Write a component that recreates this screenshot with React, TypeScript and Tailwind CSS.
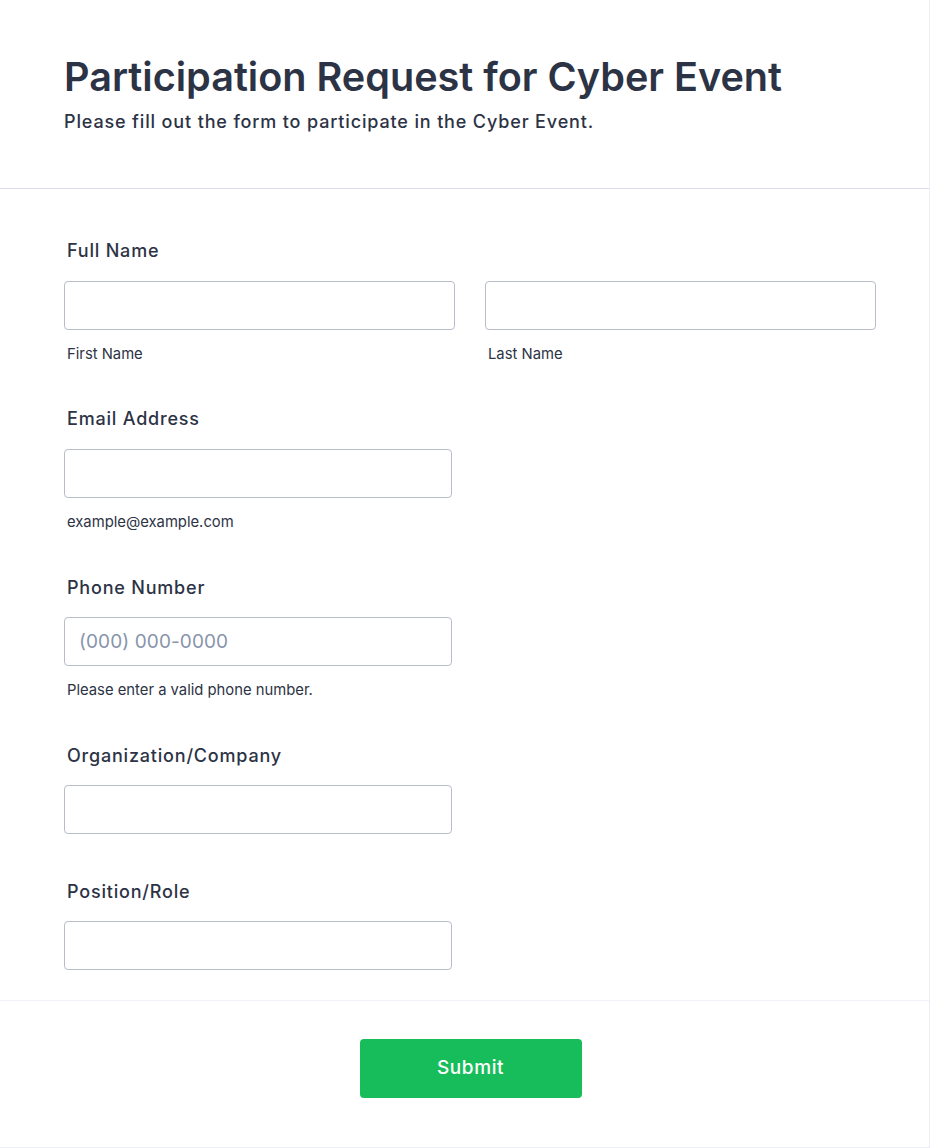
import React from 'react';

const inputCls =
  'block h-[49px] w-full rounded-[4px] border border-[#b8bdc9] bg-white px-[14px] text-[19px] tracking-[0.1px] text-[#2c3345] outline-none placeholder:text-[#8894ab]';

const Label = ({ children }: { children: React.ReactNode }) => (
  <label className="block pl-[3px] text-[18px] leading-[24px] font-medium tracking-[0.8px] text-[#2c3345]">
    {children}
  </label>
);

const Sub = ({ children }: { children: React.ReactNode }) => (
  <div className="mt-[15px] pl-[3px] text-[14.8px] leading-[18px] text-[#2c3345]">{children}</div>
);

export default function App() {
  return (
    <div className="min-h-screen bg-white font-['Inter',sans-serif] text-[#2c3345]">
      <div className="w-[930px] border-r border-b border-[#eceef6]">
        {/* Header */}
        <div className="border-b border-[#dcdcf0] px-16 pt-[53px] pb-[54px]">
          <h1 className="text-[39.6px] leading-[48px] font-semibold">Participation Request for Cyber Event</h1>
          <p className="mt-[9px] text-[18px] leading-[24px] font-medium tracking-[0.85px]">
            Please fill out the form to participate in the Cyber Event.
          </p>
        </div>

        {/* Form body */}
        <div className="pt-[50px] pr-[53px] pb-[30px] pl-16">
          <div>
            <Label>Full Name</Label>
            <div className="mt-[18px] grid grid-cols-2 gap-[30px]">
              <div>
                <input className={inputCls} type="text" />
                <Sub>First Name</Sub>
              </div>
              <div>
                <input className={inputCls} type="text" />
                <Sub>Last Name</Sub>
              </div>
            </div>
          </div>

          <div className="mt-[44px] w-[388px]">
            <Label>Email Address</Label>
            <input className={`${inputCls} mt-[18px]`} type="email" />
            <Sub>example@example.com</Sub>
          </div>

          <div className="mt-[45px] w-[388px]">
            <Label>Phone Number</Label>
            <input className={`${inputCls} mt-[17px]`} type="tel" placeholder="(000) 000-0000" />
            <Sub>Please enter a valid phone number.</Sub>
          </div>

          <div className="mt-[45px] w-[388px]">
            <Label>Organization/Company</Label>
            <input className={`${inputCls} mt-[17px]`} type="text" />
          </div>

          <div className="mt-[46px] w-[388px]">
            <Label>Position/Role</Label>
            <input className={`${inputCls} mt-[17px]`} type="text" />
          </div>
        </div>

        {/* Footer */}
        <div className="flex justify-center border-t border-[#f0f1fa] pt-[38px] pb-[49px] pl-3">
          <button
            type="submit"
            className="h-[59px] w-[222px] rounded-[4px] bg-[#18bd5b] text-[19px] font-medium tracking-[0.6px] text-white"
          >
            Submit
          </button>
        </div>
      </div>
    </div>
  );
}
